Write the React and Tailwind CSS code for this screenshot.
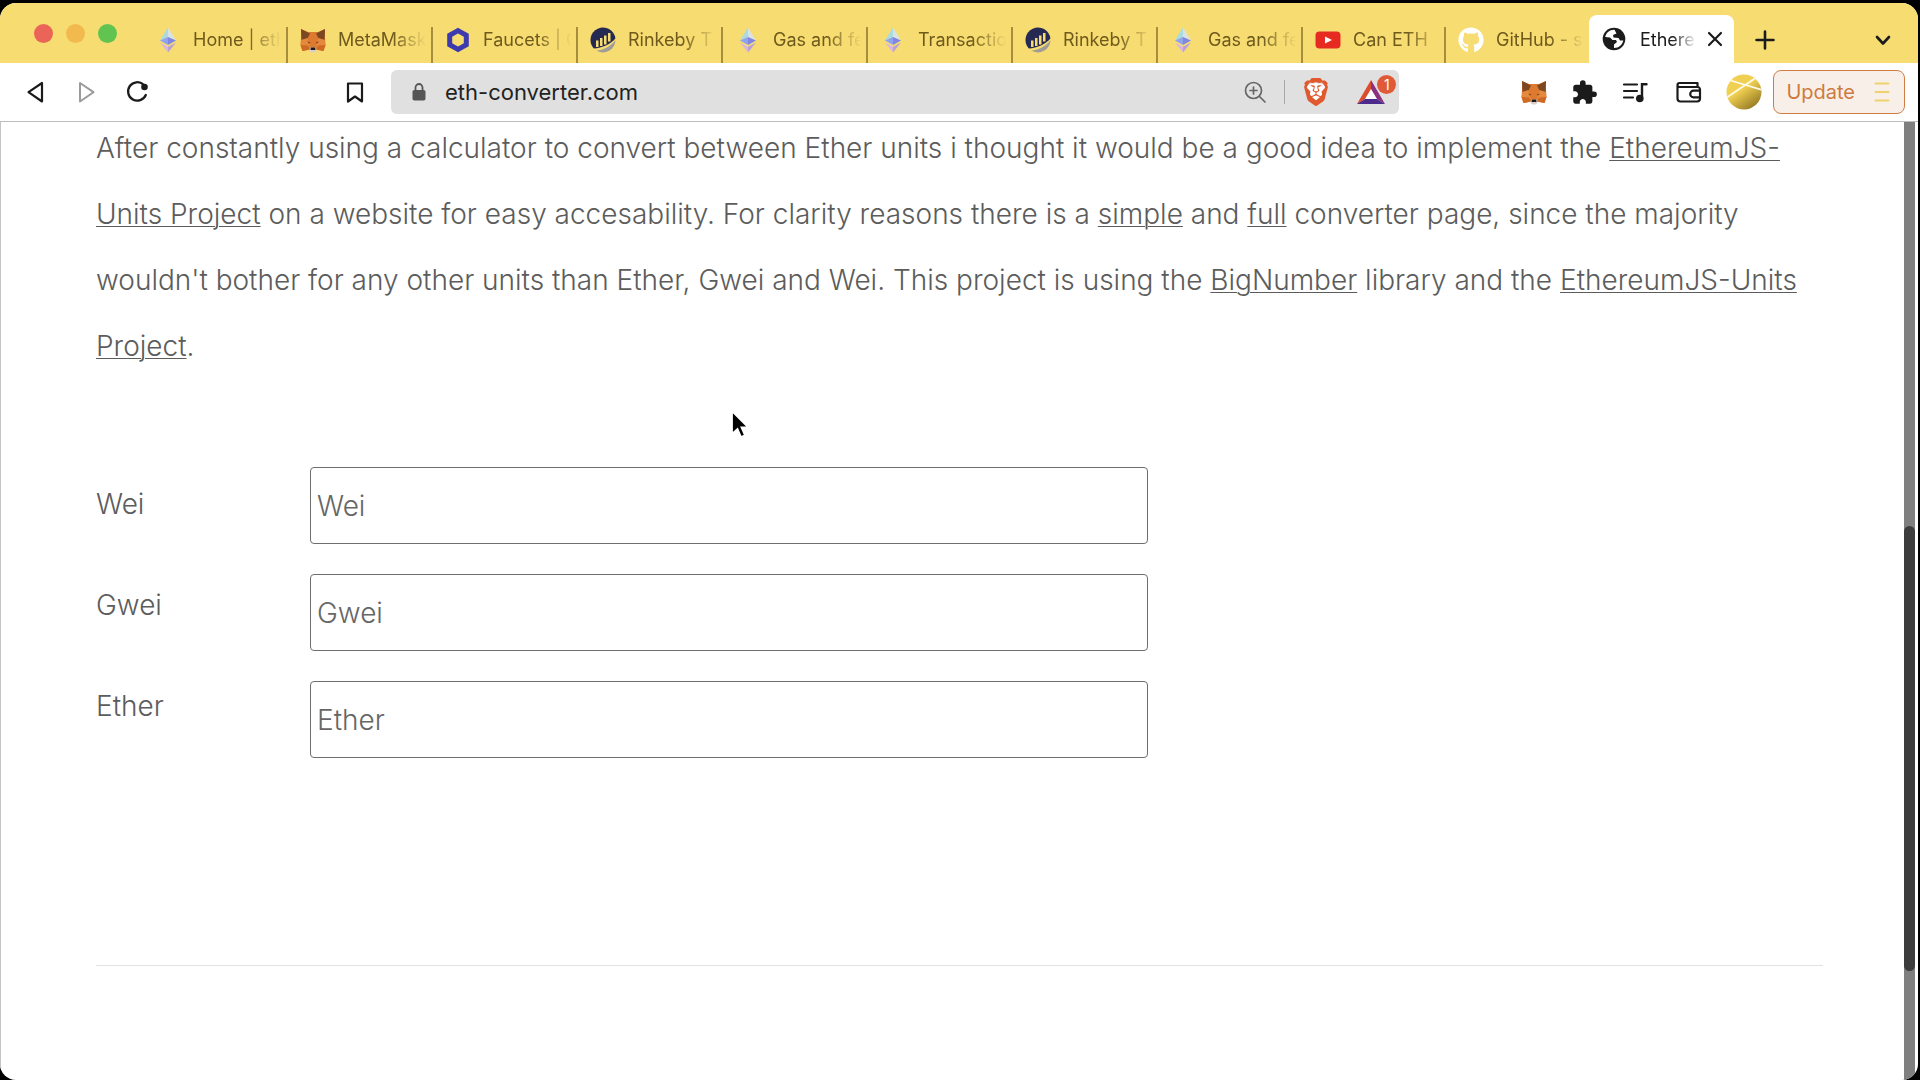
import { SiBrave } from "react-icons/si";
import { MdExtension } from "react-icons/md";
import { FaGithub } from "react-icons/fa";

function EthIcon() {
  return (
    <svg viewBox="0 0 26 26" className="size-[26px]" aria-hidden="true">
      <path d="M13 0.500 5 13.500 13 10.200Z" fill="#a9dbe0" />
      <path d="M13 0.500 21 13.500 13 10.200Z" fill="#d9e3e4" />
      <path d="M5 13.500 13 10 13 18Z" fill="#8fa3ef" />
      <path d="M21 13.500 13 10 13 18Z" fill="#8186e2" />
      <path d="M5 15.500 13 19.800V25.500Z" fill="#d9b6e0" />
      <path d="M21 15.500 13 19.800V25.500Z" fill="#b9a0d6" />
    </svg>
  );
}

function FoxIcon() {
  return (
    <svg viewBox="0 0 26 26" className="size-[26px]" aria-hidden="true">
      <path d="M1 2 8 5H18L25 2V11L25.500 18 23.500 24 16 22.500 13 24.500 10 22.500 2.500 24 0.500 18 1 11Z" fill="#dd7a30" />
      <path d="M1 2 10 6.500 7.500 11.500 1.500 13Z" fill="#7d4722" />
      <path d="M25 2 16 6.500 18.500 11.500 24.500 13Z" fill="#7d4722" />
      <path d="M1.500 13 7.500 11 10 20 0.500 18Z" fill="#e58a3d" />
      <path d="M24.500 13 18.500 11 16 20 25.500 18Z" fill="#e58a3d" />
      <path d="M0.500 18 8 18.500 10 22.500 2.500 24ZM25.500 18 18 18.500 16 22.500 23.500 24Z" fill="#cf6a25" />
      <path d="M7 14.500 10.500 15.500 9 16.500ZM19 14.500 15.500 15.500 17 16.500Z" fill="#7a3d1c" />
      <path d="M10 20.500H16L16.500 24 14.500 25.500H11.500L9.500 24Z" fill="#d9cfc8" />
      <path d="M10.800 20.500H15.200L15.500 23H10.500Z" fill="#1c1a1a" />
    </svg>
  );
}

function ChainlinkIcon() {
  return (
    <svg viewBox="0 0 26 26" className="size-[26px]" aria-hidden="true">
      <path d="M13 3.600 21.300 8.300V17.700L13 22.400 4.700 17.700V8.300Z" fill="none" stroke="#3d3ab0" strokeWidth="5" />
    </svg>
  );
}

function EtherscanIcon() {
  return (
    <svg viewBox="0 0 26 26" className="size-[26px]" aria-hidden="true">
      <path d="M3.800 21.500A12.500 12.500 0 1 1 25.400 11.500C21 17 12 21 3.800 21.500Z" fill="#262a52" />
      <path d="M6 13.500H8.500V20H6ZM10 11H12.500V19H10ZM14 8.500H16.500V17.500H14ZM18 6H20.500V14.500H18Z" fill="#f7dc72" />
      <path d="M6.500 23.500C14 23 21.500 19 25.500 13A12.500 12.500 0 0 1 6.500 23.500Z" fill="#a09c98" />
    </svg>
  );
}

function YoutubeIcon() {
  return (
    <svg viewBox="0 0 26 26" className="size-[26px]" aria-hidden="true">
      <rect x="0.500" y="4.500" width="25" height="17" rx="4" fill="#e62c20" />
      <path d="M10 9.500V16.500L17 13Z" fill="#fff" />
    </svg>
  );
}

function GlobeIcon() {
  return (
    <svg viewBox="0 0 26 26" className="size-[26px]" aria-hidden="true">
      <circle cx="13" cy="13" r="11.300" fill="#1b1b1b" />
      <path d="M13.500 3.800C9 3.500 5.200 6.500 4.200 11L9 11.500 11.500 14H15L16 16 13 18.500V22C18 22 21.500 18.500 22.300 14.500L19 14.500 17.500 12 12.500 11.500 12 9 15.500 7.500Z" fill="#fff" />
    </svg>
  );
}

const tabs = [
  { title: "Home | eth", icon: <EthIcon /> },
  { title: "MetaMask", icon: <FoxIcon /> },
  { title: "Faucets | C", icon: <ChainlinkIcon /> },
  { title: "Rinkeby T", icon: <EtherscanIcon /> },
  { title: "Gas and fe", icon: <EthIcon /> },
  { title: "Transactio", icon: <EthIcon /> },
  { title: "Rinkeby T", icon: <EtherscanIcon /> },
  { title: "Gas and fe", icon: <EthIcon /> },
  { title: "Can ETH", icon: <YoutubeIcon /> },
  { title: "GitHub - s", icon: <FaGithub className="size-[26px] text-white" /> },
];

function TabStrip() {
  return (
    <div className="flex h-15 items-end bg-[#f7dc72] pr-5">
      <div className="mr-[26px] flex items-center gap-[13px] self-center pl-[34px]">
        <button aria-label="Close window" className="size-[19px] rounded-full bg-[#ea6558]" />
        <button aria-label="Minimise window" className="size-[19px] rounded-full bg-[#f2b94e]" />
        <button aria-label="Zoom window" className="size-[19px] rounded-full bg-[#62c450]" />
      </div>
      <div className="flex">
        {tabs.map((tab, i) => (
          <button
            key={i}
            className={
              i < tabs.length - 2
                ? "flex h-9 w-[145px] items-start gap-3 border-r-2 border-[#a68e3c] pl-3 text-left"
                : "flex h-9 w-[143px] items-start gap-3 border-[#a68e3c] pl-3 text-left first:border-r-2 [&:nth-last-child(2)]:border-r-2"
            }
          >
            {tab.icon}
            <span className="w-[90px] overflow-hidden whitespace-nowrap text-[18px] leading-[25px] text-[#6e5a1c] [mask-image:linear-gradient(to_right,black_60%,transparent_98%)]">
              {tab.title}
            </span>
          </button>
        ))}
      </div>
      <div className="flex h-12 w-[145px] items-center rounded-t-lg bg-white pl-3">
        <GlobeIcon />
        <span className="ml-[13px] w-[58px] overflow-hidden whitespace-nowrap text-[18px] leading-[25px] text-[#1b1b1b] [mask-image:linear-gradient(to_right,black_55%,transparent_98%)]">
          Ethere
        </span>
        <button aria-label="Close tab" className="ml-2">
          <svg viewBox="0 0 18 18" className="size-[18px]" fill="none" stroke="#1b1b1b" strokeWidth="2.200" strokeLinecap="round">
            <path d="M3 3 15 15M15 3 3 15" />
          </svg>
        </button>
      </div>
      <button aria-label="New tab" className="mb-3 ml-5">
        <svg viewBox="0 0 22 22" className="size-[22px]" fill="none" stroke="#1b1b1b" strokeWidth="2.600" strokeLinecap="round">
          <path d="M11 2.500V19.500M2.500 11H19.500" />
        </svg>
      </button>
      <button aria-label="Search tabs" className="mb-3 ml-auto mr-1">
        <svg viewBox="0 0 22 22" className="size-[22px]" fill="none" stroke="#1b1b1b" strokeWidth="2.600" strokeLinecap="round" strokeLinejoin="round">
          <path d="M5 8 11 14.500 17 8" />
        </svg>
      </button>
    </div>
  );
}

function Toolbar() {
  return (
    <div className="flex h-[59px] items-center border-b border-[#bdbdbd] bg-white pl-6 pr-[13px]">
      <button aria-label="Back">
        <svg viewBox="0 0 24 24" className="size-6" fill="none" stroke="#1b1b1b" strokeWidth="2.200" strokeLinejoin="round">
          <path d="M18 3V21.500L4.500 12.200Z" />
        </svg>
      </button>
      <button aria-label="Forward" className="ml-[27px]">
        <svg viewBox="0 0 24 24" className="size-6" fill="none" stroke="#9b9b9b" strokeWidth="2" strokeLinejoin="round">
          <path d="M5 3V21.500L18.500 12.200Z" />
        </svg>
      </button>
      <button aria-label="Reload" className="ml-[26px]">
        <svg viewBox="0 0 24 24" className="size-6" fill="none" stroke="#1b1b1b" strokeWidth="2.300" strokeLinecap="round">
          <path d="M18.500 4.600A9.200 9.200 0 1 0 20.800 15" />
          <circle cx="19.500" cy="7" r="3.300" fill="#1b1b1b" stroke="none" />
        </svg>
      </button>
      <button aria-label="Bookmark this page" className="ml-[194px]">
        <svg viewBox="0 0 24 24" className="size-6" fill="none" stroke="#1b1b1b" strokeWidth="2.200" strokeLinejoin="round">
          <path d="M5 3.500H19V21.500L12 16.500 5 21.500Z" />
        </svg>
      </button>
      <div className="ml-6 flex h-11 flex-1 items-center rounded-md bg-[#e0e0e0] pl-5">
        <svg viewBox="0 0 16 20" className="h-5 w-4" aria-hidden="true">
          <path d="M4.500 9V5.500A3.500 3.500 0 0 1 11.500 5.500V9" fill="none" stroke="#555" strokeWidth="1.800" />
          <rect x="1.500" y="8" width="13" height="10.500" rx="1.800" fill="#555" />
        </svg>
        <input
          aria-label="Address"
          defaultValue="eth-converter.com"
          className="ml-[18px] min-w-0 flex-1 bg-transparent text-[22px] text-[#222] outline-none"
        />
        <button aria-label="Zoom level">
          <svg viewBox="0 0 24 24" className="size-6" fill="none" stroke="#666" strokeWidth="1.700" strokeLinecap="round">
            <circle cx="10.500" cy="10.500" r="8" />
            <path d="M16.500 16.500 22 22M10.500 7V14M7 10.500H14" />
          </svg>
        </button>
        <div className="mx-[17px] h-6 w-px bg-[#aaa]" />
        <button aria-label="Brave Shields" className="grid place-items-center">
          <svg viewBox="0 0 28 28" className="col-start-1 row-start-1 size-7" aria-hidden="true">
            <path d="M6 7 14 5 22 7 23 12 19 21 14 25 9 21 5 12Z" fill="#fff" />
          </svg>
          <SiBrave className="col-start-1 row-start-1 size-7 text-[#e0592f]" />
        </button>
        <button aria-label="Brave Rewards" className="relative ml-[26px] mr-[13px]">
          <svg viewBox="0 0 30 26" className="h-[26px] w-[30px]" aria-hidden="true">
            <path d="M15 1 1 25 10 19.500 15 11Z" fill="#dd4b2e" />
            <path d="M15 1 29 25 20 19.500 15 11Z" fill="#8c3080" />
            <path d="M1 25H29L20 19.500H10Z" fill="#4b2a8c" />
            <path d="M15 10 21 20H9Z" fill="#fff" />
          </svg>
          <span className="absolute -right-2.5 -top-1 flex size-[19px] items-center justify-center rounded-full bg-[#e05a38] text-[14px] text-white">
            1
          </span>
        </button>
      </div>
      <button aria-label="MetaMask" className="ml-[122px]">
        <FoxIcon />
      </button>
      <button aria-label="Extensions" className="ml-6">
        <MdExtension className="size-[27px] text-[#1b1b1b]" />
      </button>
      <button aria-label="Media playlist" className="ml-6">
        <svg viewBox="0 0 26 24" className="h-6 w-[26px]" fill="none" stroke="#1b1b1b" strokeWidth="2.200" strokeLinecap="round">
          <path d="M2 4.500H15M2 11H15M2 17.500H11" />
          <path d="M20 18V4.200H24.500" strokeWidth="2.400" />
          <circle cx="17.800" cy="18.500" r="3.800" fill="#1b1b1b" stroke="none" />
        </svg>
      </button>
      <button aria-label="Wallet" className="ml-7">
        <svg viewBox="0 0 26 24" className="h-6 w-[26px]" fill="none" stroke="#1b1b1b" strokeWidth="2.200" strokeLinejoin="round">
          <path d="M1.500 6V18.500A3 3 0 0 0 4.500 21.500H21A3 3 0 0 0 24 18.500V9.500A2.500 2.500 0 0 0 21.500 7H3.500A1.900 1.900 0 0 1 3.500 3H21.500V7" />
          <path d="M24.500 10.700H17.500A3.300 3.300 0 0 0 17.500 17.300H24.500" />
        </svg>
      </button>
      <button aria-label="Profile" className="ml-6">
        <svg viewBox="0 0 36 36" className="size-9">
          <defs>
            <linearGradient id="avatar" x1="0.300" y1="0.300" x2="0.800" y2="1">
              <stop offset="0.200" stopColor="#f0d052" />
              <stop offset="1" stopColor="#8f7420" />
            </linearGradient>
            <clipPath id="avatarClip">
              <circle cx="18" cy="18" r="17.500" />
            </clipPath>
          </defs>
          <circle cx="18" cy="18" r="17.500" fill="url(#avatar)" />
          <path d="M0 24 31 3M3 6 36 16" stroke="#fffbe8" strokeWidth="1.800" clipPath="url(#avatarClip)" />
        </svg>
      </button>
      <button className="ml-[11px] flex h-11 items-center gap-[19px] rounded-lg border border-[#cf7c45] bg-[#f8f0e8] px-3 pr-3.5 text-[20px] text-[#cf7a40]">
        Update
        <svg viewBox="0 0 16 22" className="h-[22px] w-4" stroke="#f0d26c" strokeWidth="2" strokeLinecap="round" aria-hidden="true">
          <path d="M1.500 2.500H14.500M1.500 11H14.500M1.500 19.500H14.500" />
        </svg>
      </button>
    </div>
  );
}

const units = ["Wei", "Gwei", "Ether"];

function Link({ children }) {
  return (
    <a href="#" className="underline decoration-1 underline-offset-2">
      {children}
    </a>
  );
}

function Page() {
  return (
    <main className="relative min-w-0 flex-1 pl-[95px] pr-[81px] text-[28px] font-light leading-[66px] text-[#5c5c5c]">
      <p className="-mt-[7px]">
        After constantly using a calculator to convert between Ether units i thought it would be a good idea to
        implement the <Link>EthereumJS-Units Project</Link> on a website for easy accesability. For clarity reasons
        there is a <Link>simple</Link> and <Link>full</Link> converter page, since the majority wouldn't bother for any
        other units than Ether, Gwei and Wei. This project is using the <Link>BigNumber</Link> library and the{" "}
        <Link>EthereumJS-Units Project</Link>.
      </p>
      <form className="mt-22 flex">
        <div className="flex w-[214px] flex-col gap-[35px] pt-1">
          {units.map((unit) => (
            <label key={unit} htmlFor={unit}>
              {unit}
            </label>
          ))}
        </div>
        <div className="flex w-[48.5%] flex-col gap-[30px]">
          {units.map((unit) => (
            <input
              key={unit}
              id={unit}
              placeholder={unit}
              className="h-[77px] w-full rounded border border-[#6e6e6e] bg-white px-1.5 placeholder:text-[#666]"
            />
          ))}
        </div>
      </form>
      <hr className="mt-[207px] border-[#e3e3e3]" />
      <svg viewBox="0 0 22 32" className="absolute left-[729px] top-[287px] h-8 w-[22px]" aria-hidden="true">
        <path d="M2 2V25L7.500 20 11 28 15 26.300 11.500 18.500H18.500Z" fill="#000" stroke="#fff" strokeWidth="1.800" />
      </svg>
    </main>
  );
}

export default function App() {
  return (
    <div className="flex min-h-screen flex-col bg-black pr-0.5 pt-[3px] font-['Inter',sans-serif]">
      <div className="flex flex-1 flex-col overflow-hidden rounded-2xl bg-white">
        <TabStrip />
        <Toolbar />
        <div className="flex flex-1 overflow-hidden border-l border-[#c4c4c4]">
          <Page />
          <div className="mr-[3px] flex w-[11px] flex-col bg-[#7f7f7f]">
            <div className="grow-[404]" />
            <div className="grow-[445] rounded-full bg-[#3c3c3c]" />
            <div className="grow-[109]" />
          </div>
        </div>
      </div>
    </div>
  );
}
